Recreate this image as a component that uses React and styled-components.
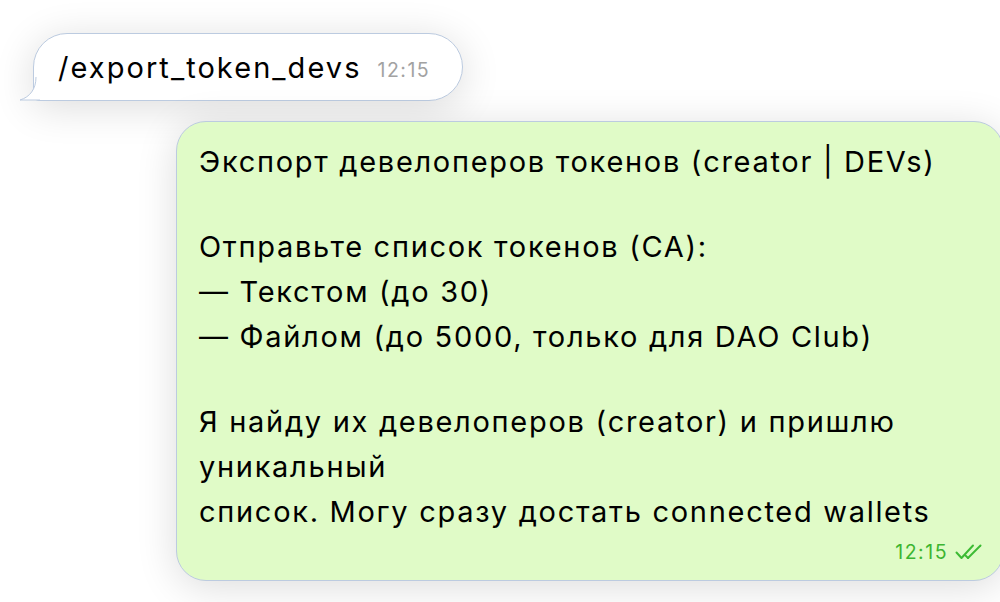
import React from "react";
import styled, { createGlobalStyle } from "styled-components";

const Global = createGlobalStyle`
  html, body { margin: 0; padding: 0; background: #ffffff; overflow: hidden; }
  body { font-family: Inter, "Liberation Sans", Arial, sans-serif; }
`;

const Chat = styled.div`
  width: 1000px;
  height: 602px;
  overflow: hidden;
  display: flex;
  flex-direction: column;
  gap: 20px;
  padding-top: 33px;
  box-sizing: border-box;
  background: #ffffff;
`;

const Row = styled.div`
  display: flex;
  padding-left: ${(p) => p.$indent}px;
`;

const Bubble = styled.div`
  position: relative;
  flex: none;
  box-sizing: border-box;
  border: 1px solid #bccbe0;
  box-shadow: 0 6px 40px rgba(0, 0, 0, 0.14);
  color: #000;
`;

const InBubble = styled(Bubble)`
  background: #ffffff;
  height: 68px;
  border-radius: 34px 34px 34px 6px;
  padding: 0 32px 0 24px;
  display: flex;
  align-items: center;
  gap: 16px;
`;

const OutBubble = styled(Bubble)`
  background: #e0fbc7;
  width: 828px;
  border-radius: 30px;
  padding: 17px 20px 14px 22px;
`;

const MsgText = styled.span`
  font-size: 29px;
  line-height: 45px;
  letter-spacing: 2.05px;
  white-space: nowrap;
`;

const Para = styled.p`
  margin: 0 0 ${(p) => (p.$last ? 0 : 40)}px;
  font-size: 29px;
  line-height: 45px;
  letter-spacing: 1.7px;
  white-space: nowrap;
`;

const Time = styled.span`
  font-size: 19.5px;
  letter-spacing: 1.5px;
  color: ${(p) => p.$color};
  margin-top: ${(p) => p.$drop || 0}px;
`;

const Meta = styled.div`
  display: flex;
  justify-content: flex-end;
  align-items: center;
  gap: 7px;
  margin-top: 4px;
  margin-right: -3px;
  height: 28px;
`;

const Tail = styled.svg`
  position: absolute;
  left: -14px;
  bottom: -1px;
  width: 24px;
  height: 24px;
  overflow: visible;
`;

const Checks = () => (
  <svg width="31" height="16" viewBox="0 0 31 16" fill="none" stroke="#3dbb34" strokeWidth="2" strokeLinecap="round" strokeLinejoin="round">
    <path d="M1.5 8.5 L6.5 14 L18 1.5" />
    <path d="M13 14 L25.5 1.5" />
    <path d="M10.5 11.5 L13 14" />
  </svg>
);

export default function App() {
  return (
    <>
      <Global />
      <Chat>
        <Row $indent={33}>
          <InBubble>
            <Tail viewBox="0 0 24 24">
              <path
                d="M16 0 C16 12 10 20 0 23 L20 23 L20 0 Z"
                fill="#ffffff"
              />
              <path
                d="M16 0 C16 12 10 20 0 23 L20 23"
                fill="none"
                stroke="#bccbe0"
                strokeWidth="1"
              />
            </Tail>
            <MsgText>/export_token_devs</MsgText>
            <Time $color="#a2a2a2" $drop={6}>12:15</Time>
          </InBubble>
        </Row>
        <Row $indent={176}>
          <OutBubble>
            <Para>Экспорт девелоперов токенов (creator | DEVs)</Para>
            <Para>
              Отправьте список токенов (CA):
              <br />— Текстом (до 30)
              <br />— Файлом (до 5000, только для DAO Club)
            </Para>
            <Para $last>
              Я найду их девелоперов (creator) и пришлю
              <br />уникальный
              <br />список. Могу сразу достать connected wallets
            </Para>
            <Meta>
              <Time $color="#3cb531">12:15</Time>
              <Checks />
            </Meta>
          </OutBubble>
        </Row>
      </Chat>
    </>
  );
}
